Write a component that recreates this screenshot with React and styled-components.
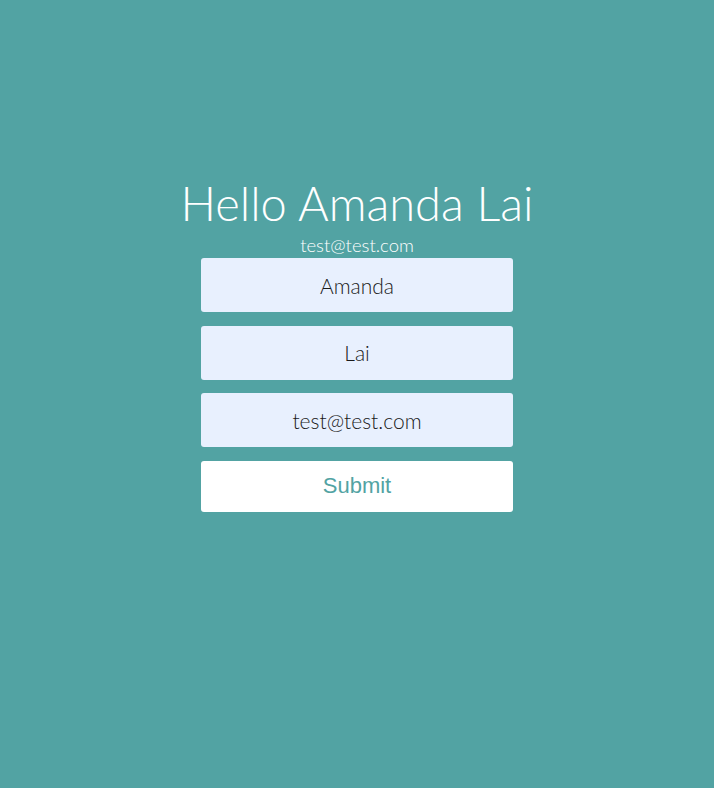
import styled, { createGlobalStyle } from "styled-components";

const GlobalStyle = createGlobalStyle`
  html, body {
    margin: 0;
    padding: 0;
    background: #52a3a3;
  }
  body {
    font-family: "Source Sans Pro", Lato, "Open Sans", sans-serif;
  }
`;

const Root = styled.div`
  min-height: 788px;
  display: flex;
  flex-direction: column;
  align-items: center;
  padding-top: 173px;
  box-sizing: border-box;
  color: #ffffff;
`;

const Title = styled.h1`
  margin: 0;
  font-size: 47px;
  font-weight: 300;
  line-height: 60px;
`;

const Email = styled.div`
  font-size: 18.5px;
  font-weight: 300;
  line-height: 25px;
`;

const Form = styled.form`
  display: flex;
  flex-direction: column;
  gap: 13.5px;
  width: 312px;
`;

const Field = styled.input`
  box-sizing: border-box;
  width: 100%;
  height: 54px;
  border: none;
  border-radius: 3px;
  background: #e8f0fe;
  color: #1a1a1a;
  font-family: inherit;
  font-size: 21px;
  font-weight: 300;
  text-align: center;
  outline: none;
`;

const SubmitButton = styled.button`
  height: 51px;
  border: none;
  border-radius: 3px;
  background: #ffffff;
  color: #52a3a3;
  font-family: "Liberation Sans", Arial, sans-serif;
  font-size: 22px;
  cursor: pointer;
`;

const App = () => {
  return (
    <>
      <GlobalStyle />
      <Root>
        <Title>Hello Amanda Lai</Title>
        <Email>test@test.com</Email>
        <Form onSubmit={(e) => e.preventDefault()}>
          <Field defaultValue="Amanda" />
          <Field defaultValue="Lai" />
          <Field defaultValue="test@test.com" />
          <SubmitButton type="submit">Submit</SubmitButton>
        </Form>
      </Root>
    </>
  );
};

export default App;
